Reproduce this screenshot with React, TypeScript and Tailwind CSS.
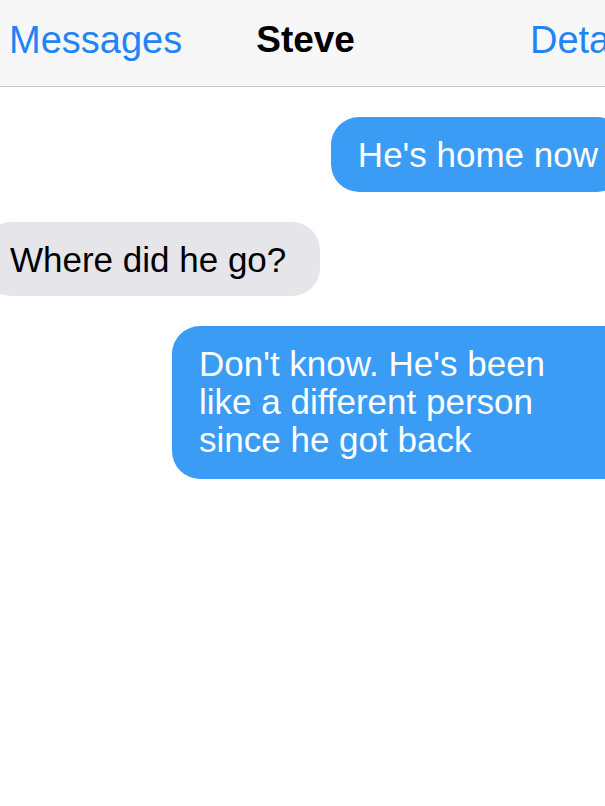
import React from 'react';

interface Message {
  id: number;
  text: string;
  fromMe: boolean;
}

const messages: Message[] = [
  { id: 1, text: "He's home now", fromMe: true },
  { id: 2, text: 'Where did he go?', fromMe: false },
  { id: 3, text: "Don't know. He's been like a different person since he got back", fromMe: true },
];

const App: React.FC = () => {
  return (
    <div
      className="w-[605px] h-[806px] overflow-hidden bg-white"
      style={{ fontFamily: '"Liberation Sans", Arial, sans-serif' }}
    >
      {/* Nav bar */}
      <header className="h-[87px] flex items-center whitespace-nowrap bg-[#f7f7f8] border-b border-[#c6c6c9] pb-[6px]">
        <span className="ml-[9px] text-[38px] text-[#1f84f4]">Messages</span>
        <span className="ml-[74px] text-[37px] font-bold text-black">Steve</span>
        <span className="ml-[175px] text-[38px] text-[#1f84f4]">Details</span>
      </header>

      {/* Conversation */}
      <div className="flex flex-col gap-[30px] pt-[30px]">
        {messages.map((msg) =>
          msg.fromMe ? (
            <div
              key={msg.id}
              className={`flex justify-end ${msg.id === 3 ? 'mr-[-30px]' : 'mr-[-20px]'}`}
            >
              <div
                className={`rounded-[28px] bg-[#3b9cf6] text-white text-[35px] leading-[38px] pl-[27px] ${
                  msg.id === 3
                    ? 'w-[463px] pr-[40px] pt-[19px] pb-[20px]'
                    : 'pr-[27px] pt-[19px] pb-[18px] whitespace-nowrap'
                }`}
              >
                {msg.text}
              </div>
            </div>
          ) : (
            <div key={msg.id} className="flex justify-start ml-[-17px]">
              <div className="rounded-[28px] bg-[#e5e5ea] text-black text-[35px] leading-[38px] pt-[19px] pb-[17px] pl-[27px] pr-[34px] whitespace-nowrap">
                {msg.text}
              </div>
            </div>
          )
        )}
      </div>
    </div>
  );
};

export default App;
